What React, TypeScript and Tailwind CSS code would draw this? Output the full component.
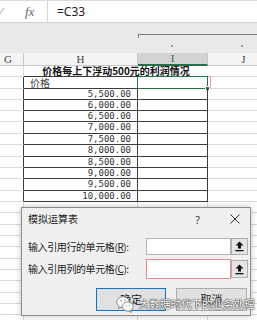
import React from "react";

const sans = "font-['Noto_Sans','Noto_Sans_CJK_SC',sans-serif]";
const cjk = "font-['Noto_Sans_CJK_SC',sans-serif]";

const tableRows = [
  { v: "价格", h: "h-[12px]", label: true },
  { v: "5,500.00", h: "h-[11px]" },
  { v: "6,000.00", h: "h-[11px]" },
  { v: "6,500.00", h: "h-[11px]" },
  { v: "7,000.00", h: "h-[12px]" },
  { v: "7,500.00", h: "h-[11px]" },
  { v: "8,000.00", h: "h-[12px]" },
  { v: "8,500.00", h: "h-[11px]" },
  { v: "9,000.00", h: "h-[11px]" },
  { v: "9,500.00", h: "h-[12px]" },
  { v: "10,000.00", h: "h-[11px]" },
];

const emptyRows = ["h-[11px]", "h-[12px]", "h-[11px]", "h-[11px]", "h-[12px]", "h-[11px]", "h-[11px]", "h-[12px]", "h-[11px]", "h-[11px]", "h-[12px]"];

const dark = "border-[#3c3c3c]";
const light = "border-[#dadada]";

function UpArrowBtn() {
  return (
    <div className="w-[17px] h-full bg-[#e5e5e5] border border-[#adadad] flex items-center justify-center">
      <svg width="9" height="11" viewBox="0 0 9 11">
        <path d="M4.5 0.5 L8.5 4.5 L6 4.5 L6 7.5 L3 7.5 L3 4.5 L0.5 4.5 Z" fill="#111" />
        <rect x="0.5" y="9" width="8" height="1.3" fill="#111" />
      </svg>
    </div>
  );
}

function WeChatIcon() {
  return (
    <svg width="18" height="18" viewBox="0 0 18 18">
      <ellipse cx="7" cy="7" rx="6.3" ry="5.3" fill="#fff" stroke="#8a8a8a" strokeWidth="1" />
      <path d="M3.2 11 L2.4 13.6 L5.6 12" fill="#fff" stroke="#8a8a8a" strokeWidth="1" />
      <ellipse cx="11.8" cy="11.6" rx="5.4" ry="4.6" fill="#fff" stroke="#8a8a8a" strokeWidth="1" />
      <path d="M14.6 15.2 L15.6 17.4 L12.6 16.1" fill="#fff" stroke="#8a8a8a" strokeWidth="1" />
      <circle cx="5" cy="5.6" r="0.8" fill="#8a8a8a" />
      <circle cx="9" cy="5.6" r="0.8" fill="#8a8a8a" />
      <circle cx="10.2" cy="10.6" r="0.7" fill="#8a8a8a" />
      <circle cx="13.4" cy="10.6" r="0.7" fill="#8a8a8a" />
    </svg>
  );
}

export default function App() {
  return (
    <div className="relative w-[257px] h-[320px] overflow-hidden bg-white">
      {/* formula bar */}
      <div className="flex h-[22px] bg-white border-t border-[#dcdcdc]">
        <div className="w-[47px] flex items-center relative">
          <svg width="6" height="10" viewBox="0 0 6 10" className="absolute left-0 top-[6px]">
            <path d="M-2 9 L4 1" stroke="#b0b0b0" strokeWidth="1.1" fill="none" />
          </svg>
          <span className="ml-[25px] font-['Liberation_Serif',serif] italic text-[13px] text-[#666] leading-none">fx</span>
        </div>
        <div className="flex-1 border-l border-[#d4d4d4] flex items-center pl-[9px]">
          <span className={`${sans} text-[12px] text-[#222] leading-none`}>=C33</span>
        </div>
      </div>

      {/* outline band */}
      <div className="h-[31px] bg-[#e9e9e9] border-t border-[#d0d0d0] pt-[11px]">
        <div className="ml-[138px] h-[4px] border-t border-l border-[#7a7a7a]" />
        <div className="flex mt-[7px]">
          <div className="ml-[171px] w-[2px] h-[2px] bg-[#a0a0a0]" />
          <div className="ml-[68px] w-[2px] h-[2px] bg-[#a0a0a0]" />
        </div>
      </div>

      {/* column headers */}
      <div className="grid grid-cols-[24px_114px_70px_72px] h-[13px] font-['Liberation_Serif',serif] text-[11px] text-[#444] leading-none">
        <div className="bg-[#f4f4f4] border-r border-b border-[#c8c8c8] flex items-center pl-[4px]">G</div>
        <div className="bg-[#f4f4f4] border-r border-b border-[#c8c8c8] flex items-center justify-center">H</div>
        <div className="bg-[#d3d3d3] border-r border-[#c8c8c8] border-b-2 border-b-[#217346] flex items-center justify-center text-[#217346]">I</div>
        <div className="bg-[#f4f4f4] border-r border-b border-[#c8c8c8] flex items-center justify-center">J</div>
      </div>

      {/* sheet */}
      <div className="grid grid-cols-[24px_114px_70px_72px] text-[#333]">
        {/* title row */}
        <div className={`h-[11px] border-r border-b ${light}`} />
        <div className={`col-span-2 h-[11px] border-b ${dark} flex items-center justify-center ${cjk} font-bold text-[10px] leading-[10px] text-[#111]`}>
          价格每上下浮动500元的利润情况
        </div>
        <div className={`h-[11px] border-r border-b ${light}`} />

        {tableRows.map((r, i) => (
          <React.Fragment key={i}>
            <div className={`${r.h} border-r ${dark} border-b border-b-[#dadada]`} />
            <div
              className={`${r.h} border-r border-b ${dark} flex items-center leading-none ${
                r.label
                  ? `${cjk} text-[10px] pl-[6px] text-[#444]`
                  : "justify-end pr-[6px] font-['DejaVu_Sans_Mono',monospace] text-[9px]"
              }`}
            >
              {r.v}
            </div>
            <div className={`${r.h} border-r border-b ${dark} relative`}>
              {i === 0 && (
                <>
                  <div className="absolute -left-px -top-px -right-[4px] bottom-[-1px] border border-[#f0a0a0]" />
                  <div className="absolute -left-px -top-px right-[-1px] bottom-[-1px] border border-[#217346]" />
                  <div className="absolute right-[-3px] bottom-[-3px] w-[5px] h-[5px] bg-[#217346] border border-white" />
                </>
              )}
            </div>
            <div className={`${r.h} border-r border-b ${light}`} />
          </React.Fragment>
        ))}

        {emptyRows.map((h, i) => (
          <React.Fragment key={`e${i}`}>
            <div className={`${h} border-r border-b ${light}`} />
            <div className={`${h} border-r border-b ${light}`} />
            <div className={`${h} border-r border-b ${light}`} />
            <div className={`${h} border-r border-b ${light}`} />
          </React.Fragment>
        ))}
      </div>

      {/* dialog */}
      <div className={`absolute left-[21px] top-[207px] w-[230px] h-[109px] bg-[#f0f0f0] border border-[#8c8c8c] shadow-[0_0_6px_rgba(0,0,0,0.25)] ${cjk} text-[#222]`}>
        <div className="h-[22px] flex items-center pl-[6px] pr-[10px]">
          <span className="text-[10px] leading-none">模拟运算表</span>
          <span className={`${sans} ml-auto text-[11px] text-[#444] leading-none mr-[30px]`}>?</span>
          <svg width="10" height="10" viewBox="0 0 10 10">
            <path d="M0.5 0.5 L9.5 9.5 M9.5 0.5 L0.5 9.5" stroke="#333" strokeWidth="1" />
          </svg>
        </div>

        <div className="flex items-center mt-[8px] h-[17px] pl-[6px]">
          <span className="text-[10px] leading-none tracking-[-0.4px] w-[118px]">
            输入引用行的单元格(<span className="underline">R</span>):
          </span>
          <div className="w-[85px] h-full bg-white border border-[#b4b4b4]" />
          <UpArrowBtn />
        </div>

        <div className="flex items-center mt-[4px] h-[20px] pl-[6px]">
          <span className="text-[10px] leading-none tracking-[-0.4px] w-[118px]">
            输入引用列的单元格(<span className="underline">C</span>):
          </span>
          <div className="w-[85px] h-full bg-white border border-[#f08a8a]" />
          <div className="h-[18px]">
            <UpArrowBtn />
          </div>
        </div>

        <div className="flex mt-[9px] pl-[74px] gap-[10px]">
          <div className="w-[70px] h-[23px] bg-[#e1e1e1] border border-[#0078d7] flex items-center justify-center text-[11px] leading-none">确定</div>
          <div className="w-[71px] h-[23px] bg-[#e1e1e1] border border-[#adadad] flex items-center justify-center text-[11px] leading-none">取消</div>
        </div>
      </div>

      {/* watermark */}
      <div className="absolute left-[116px] top-[295px] flex items-center gap-[5px]">
        <WeChatIcon />
        <span className={`${cjk} text-[10.5px] leading-none text-white [text-shadow:0_0_1px_#333,0_0_1px_#333,0_0_2px_#555]`}>
          大数据时代下的业务处理
        </span>
      </div>
    </div>
  );
}
